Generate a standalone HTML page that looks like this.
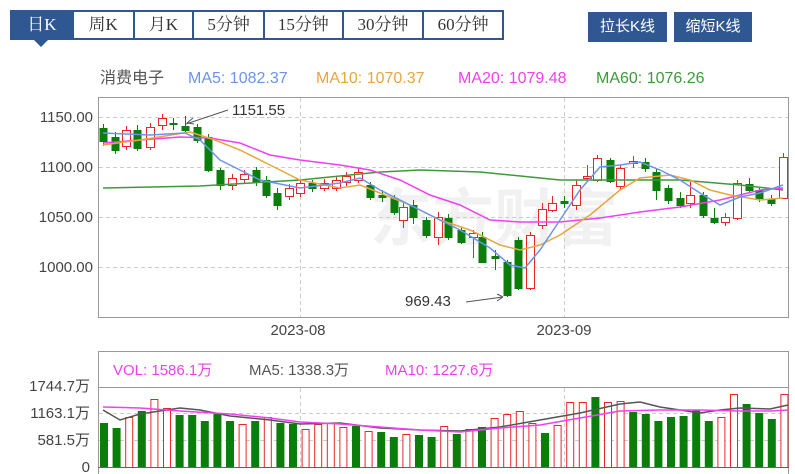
<!DOCTYPE html><html><head><meta charset="utf-8"><style>
body{margin:0;width:795px;height:474px;background:#fff;overflow:hidden;position:relative;font-family:"Liberation Sans","Noto Sans CJK SC",sans-serif}
.tabs{position:absolute;left:10px;top:10px;height:30px;border:2px solid #2f5791;display:flex;box-sizing:border-box;width:494px;background:#2f5791}
.tabs div{background:#fff;color:#333;font-family:"Liberation Serif","Noto Serif CJK SC",serif;font-size:17px;line-height:26px;text-align:center;margin-right:2px}
.tabs div.on{background:#2f5791;color:#fff}
.btn{position:absolute;top:12px;height:30px;background:#2f5791;color:#fff;font-size:15px;line-height:30px;text-align:center}
.tri{position:absolute;left:34px;top:40px;width:0;height:0;border-left:7px solid transparent;border-right:7px solid transparent;border-top:7px solid #2f5791}
</style></head><body>
<div class="tabs"><div class="on" style="width:60px">日K</div><div style="width:59px">周K</div><div style="width:58px">月K</div><div style="width:69px">5分钟</div><div style="width:77px">15分钟</div><div style="width:79px">30分钟</div><div style="width:78px;margin-right:0">60分钟</div></div>
<div class="tri"></div>
<div class="btn" style="left:588px;width:79px">拉长K线</div>
<div class="btn" style="left:674px;width:78px">缩短K线</div>
<svg id="s" width="795" height="474" style="position:absolute;left:0;top:0" font-family="Liberation Sans, Noto Sans CJK SC, sans-serif">
<text x="100" y="83" font-size="16" fill="#555">消费电子</text>
<text x="188" y="83" font-size="16" fill="#6d94e8">MA5: 1082.37</text>
<text x="316" y="83" font-size="16" fill="#e8a640">MA10: 1070.37</text>
<text x="458" y="83" font-size="16" fill="#f040f0">MA20: 1079.48</text>
<text x="596" y="83" font-size="16" fill="#3c9a3c">MA60: 1076.26</text>
<text x="370" y="240" font-size="62" fill="#000" opacity="0.05" font-weight="bold">东方财富</text>
<g font-size="15" fill="#444" text-anchor="end">
<text x="93" y="122">1150.00</text><text x="93" y="172">1100.00</text><text x="93" y="222">1050.00</text><text x="93" y="272">1000.00</text>
<text x="90" y="391">1744.7万</text><text x="90" y="418">1163.1万</text><text x="90" y="445">581.5万</text><text x="90" y="472">0</text>
</g>
<text x="298" y="335" font-size="15" fill="#444" text-anchor="middle">2023-08</text>
<text x="564" y="335" font-size="15" fill="#444" text-anchor="middle">2023-09</text>
<g stroke="#ccc" stroke-dasharray="4,3" stroke-width="1">
<line x1="99" y1="117.5" x2="788" y2="117.5"/><line x1="99" y1="167.5" x2="788" y2="167.5"/><line x1="99" y1="217.5" x2="788" y2="217.5"/><line x1="99" y1="267.5" x2="788" y2="267.5"/>
<line x1="300.5" y1="98" x2="300.5" y2="317"/><line x1="564.5" y1="98" x2="564.5" y2="317"/>
<line x1="99" y1="413.5" x2="788" y2="413.5"/><line x1="99" y1="440.5" x2="788" y2="440.5"/>
<line x1="300.5" y1="388" x2="300.5" y2="467"/><line x1="564.5" y1="388" x2="564.5" y2="467"/>
</g>
<rect x="98.5" y="97.5" width="690" height="220" fill="none" stroke="#999"/>
<rect x="98.5" y="351.5" width="690" height="130" fill="none" stroke="#999"/>
<line x1="98" y1="387.5" x2="789" y2="387.5" stroke="#999"/>
<line x1="98" y1="467.5" x2="789" y2="467.5" stroke="#666"/>
<text x="113" y="375" font-size="15" fill="#f040f0">VOL: 1586.1万</text>
<text x="249" y="375" font-size="15" fill="#555">MA5: 1338.3万</text>
<text x="385" y="375" font-size="15" fill="#f040f0">MA10: 1227.6万</text>
<g id="c"></g>
<g fill="none" stroke-width="1.5">
<polyline stroke="#3c9a3c" points="103,188 200,186 300,180 380,172 420,170 480,172 560,180 620,180 680,180 740,185 783,190"/>
<polyline stroke="#f040f0" points="103,143 140,140 180,137 210,138 240,143 270,155 300,160 340,165 370,170 400,180 430,195 460,205 490,220 520,222 560,222 600,218 640,212 680,207 720,200 740,195 760,190 783,188"/>
<polyline stroke="#e8a640" points="103,145 140,140 190,132 215,140 240,150 270,165 300,180 340,188 360,185 380,193 410,205 440,220 470,230 500,245 520,250 540,245 560,235 590,215 620,190 640,178 670,175 690,180 710,190 730,195 760,200 783,198"/>
<polyline stroke="#6d94e8" points="103,133 150,135 185,133 200,140 220,160 240,170 260,180 300,188 340,183 360,178 380,190 400,200 430,215 460,230 490,248 510,265 525,268 540,250 560,220 580,190 600,167 620,165 640,162 660,170 680,180 700,193 720,205 740,197 760,193 783,185"/>
</g>
<g id="v"></g>
<g fill="none" stroke-width="1.5">
<polyline stroke="#555" points="103,410 120,420 140,414 180,408 200,410 230,416 270,420 300,424 340,423 380,428 420,430 460,431 500,427 540,420 580,413 620,404 640,402 660,407 680,410 700,413 720,410 740,408 770,409 788,405"/>
<polyline stroke="#f040f0" points="103,407 140,408 180,411 230,414 270,418 300,422 340,424 380,427 420,430 460,432 500,428 540,425 580,418 620,411 660,410 700,410 740,411 770,411 788,410"/>
</g>
<g stroke="#555" fill="none" stroke-width="1"><path d="M186 124 L228 110"/><path d="M187 123 l6 -5 M187 123 l7 1"/><path d="M466 302 L503 297"/><path d="M503 297 l-6 -3 M503 297 l-6 4"/></g>
<text x="232" y="115" font-size="15" fill="#333">1151.55</text>
<text x="405" y="306" font-size="15" fill="#333">969.43</text>
</svg>
<script>
var C=[[103,'g',128,141,124,146],[115,'g',137,150,132,154],[126,'r',130,146,126,150],[137,'g',130,148,125,151],[150,'r',127,147,123,150],[162,'r',118,125,114,130],[173,'g',123,124,118,130],[185,'g',126,130,116,133],[197,'g',127,140,124,143],[208,'g',137,170,134,172],[220,'g',170,185,168,190],[232,'r',178,185,174,190],[244,'r',174,179,170,183],[256,'g',170,182,167,186],[266,'g',180,195,176,198],[277,'g',193,205,188,210],[289,'r',188,196,184,200],[300,'r',183,193,180,197],[312,'g',183,188,180,192],[324,'r',183,188,179,191],[336,'r',180,188,176,191],[346,'r',176,182,172,186],[358,'r',172,180,168,183],[370,'g',185,197,182,200],[382,'g',195,197,190,202],[394,'g',198,212,195,215],[403,'r',207,220,202,228],[413,'g',205,217,200,224],[426,'g',220,235,217,238],[438,'r',217,237,212,245],[448,'g',218,237,214,240],[461,'g',230,242,228,244],[473,'r',233,237,230,258],[482,'g',237,262,232,262],[495,'g',256,258,250,270],[507,'g',262,295,260,297],[518,'g',240,288,237,290],[530,'r',235,288,232,290],[542,'r',209,225,203,229],[552,'r',203,210,196,212],[564,'g',201,203,196,208],[576,'r',185,205,180,210],[587,'r',176,178,165,180],[597,'r',158,180,155,182],[610,'g',160,181,158,183],[620,'r',168,186,165,190],[633,'r',161,163,156,168],[645,'g',162,168,158,172],[656,'g',172,190,168,200],[668,'g',188,200,185,204],[680,'g',198,205,192,208],[690,'r',195,203,182,208],[703,'g',195,215,192,218],[714,'g',218,222,208,224],[725,'r',217,222,213,226],[737,'r',183,218,180,220],[749,'g',184,190,178,192],[759,'g',190,198,188,202],[771,'g',199,203,195,206],[783,'r',157,198,153,198]];
var V=[423,428,417,411,399,408,415,415,421,414,421,424,421,417,423,424,429,424,423,427,426,431,432,437,434,435,437,426,434,429,427,418,414,411,423,433,425,402,402,397,402,401,412,414,421,417,416,410,421,417,394,404,413,419,394];
var VC="ggrgrrgggggrgrggrrrrgrggrggrgrgrrrrgrrrgrrgggggggrrgggr";
var h='';
C.forEach(function(c,i){var col=c[1]=='r'?'#e8262a':'#0a7d0a';var x=c[0];
h+='<line x1="'+(x+.5)+'" y1="'+c[4]+'" x2="'+(x+.5)+'" y2="'+c[5]+'" stroke="'+col+'"/>';
var hh=Math.max(1,c[3]-c[2]);
if(c[1]=='r')h+='<rect x="'+(x-3.5)+'" y="'+(c[2]+.5)+'" width="8" height="'+hh+'" fill="#fff" stroke="'+col+'"/>';
else h+='<rect x="'+(x-3.5)+'" y="'+c[2]+'" width="8" height="'+(hh+1)+'" fill="'+col+'"/>';
});
document.getElementById('c').innerHTML=h;
var v='';
V.forEach(function(vy,i){var x=100+i*12.6;var r=VC[i]=='r';var col=r?'#e8262a':'#0a7d0a';
if(r)v+='<rect x="'+(x+.5)+'" y="'+(vy+.5)+'" width="7" height="'+(467-vy)+'" fill="#fff" stroke="'+col+'"/>';
else v+='<rect x="'+x+'" y="'+vy+'" width="8" height="'+(467-vy)+'" fill="'+col+'"/>';});
document.getElementById('v').innerHTML=v;
</script>
</body></html>
